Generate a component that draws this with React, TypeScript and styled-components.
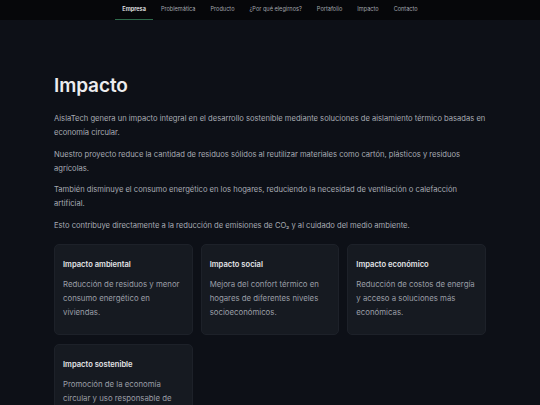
import React from "react";
import styled, { createGlobalStyle } from "styled-components";

const Global = createGlobalStyle`
  html, body { margin: 0; padding: 0; background: #0d1017; }
  body { font-family: Inter, "Noto Sans", sans-serif; color: #e6e7ea; -webkit-font-smoothing: antialiased; }
  * { box-sizing: border-box; }
`;

const Page = styled.div`
  min-height: 405px;
  background: #0d1017;
`;

const Nav = styled.nav`
  height: 20px;
  background: #06070a;
  display: flex;
  justify-content: center;
  align-items: stretch;
`;

const NavItem = styled.a<{ $active?: boolean }>`
  display: flex;
  align-items: center;
  padding: 0 7.5px 1px;
  font-size: 5.6px;
  font-weight: ${(p) => (p.$active ? 600 : 400)};
  color: ${(p) => (p.$active ? "#e9eaec" : "#a3a6ad")};
  border-bottom: 1.5px solid ${(p) => (p.$active ? "#2e6a4b" : "transparent")};
  white-space: nowrap;
`;

const Main = styled.main`
  width: 432px;
  margin: 0 auto;
  padding: 54px 0 0;
`;

const Title = styled.h1`
  margin: 0 0 15px;
  font-size: 19px;
  line-height: 23px;
  font-weight: 600;
  color: #ececee;
  letter-spacing: -0.1px;
`;

const Para = styled.p`
  margin: 0 0 7.5px;
  font-size: 7.6px;
  line-height: 14px;
  color: #a7abb3;
`;

const Grid = styled.div`
  display: grid;
  grid-template-columns: repeat(3, 1fr);
  gap: 8.5px 8px;
  margin-top: 11px;
`;

const Card = styled.div`
  background: #161a21;
  border: 1px solid #1d2129;
  border-radius: 5px;
  padding: 14.5px 8px 15.5px;
`;

const CardTitle = styled.h3`
  margin: 0 0 5.5px;
  font-size: 7.6px;
  line-height: 12px;
  font-weight: 600;
  color: #e4e5e8;
`;

const CardText = styled.p`
  margin: 0;
  font-size: 7.8px;
  line-height: 14px;
  color: #9a9ea6;
`;

const navItems = [
  "Empresa",
  "Problemática",
  "Producto",
  "¿Por qué elegirnos?",
  "Portafolio",
  "Impacto",
  "Contacto",
];

const cards = [
  { t: "Impacto ambiental", d: "Reducción de residuos y menor consumo energético en viviendas." },
  { t: "Impacto social", d: "Mejora del confort térmico en hogares de diferentes niveles socioeconómicos." },
  { t: "Impacto económico", d: "Reducción de costos de energía y acceso a soluciones más económicas." },
  { t: "Impacto sostenible", d: "Promoción de la economía circular y uso responsable de los recursos." },
];

export default function App() {
  return (
    <Page>
      <Global />
      <Nav>
        {navItems.map((n, i) => (
          <NavItem key={n} $active={i === 0}>
            {n}
          </NavItem>
        ))}
      </Nav>
      <Main>
        <Title>Impacto</Title>
        <Para>
          AislaTech genera un impacto integral en el desarrollo sostenible mediante soluciones de aislamiento térmico basadas en economía circular.
        </Para>
        <Para>
          Nuestro proyecto reduce la cantidad de residuos sólidos al reutilizar materiales como cartón, plásticos y residuos agrícolas.
        </Para>
        <Para>
          También disminuye el consumo energético en los hogares, reduciendo la necesidad de ventilación o calefacción artificial.
        </Para>
        <Para>
          Esto contribuye directamente a la reducción de emisiones de CO₂ y al cuidado del medio ambiente.
        </Para>
        <Grid>
          {cards.map((c) => (
            <Card key={c.t}>
              <CardTitle>{c.t}</CardTitle>
              <CardText>{c.d}</CardText>
            </Card>
          ))}
        </Grid>
      </Main>
    </Page>
  );
}
